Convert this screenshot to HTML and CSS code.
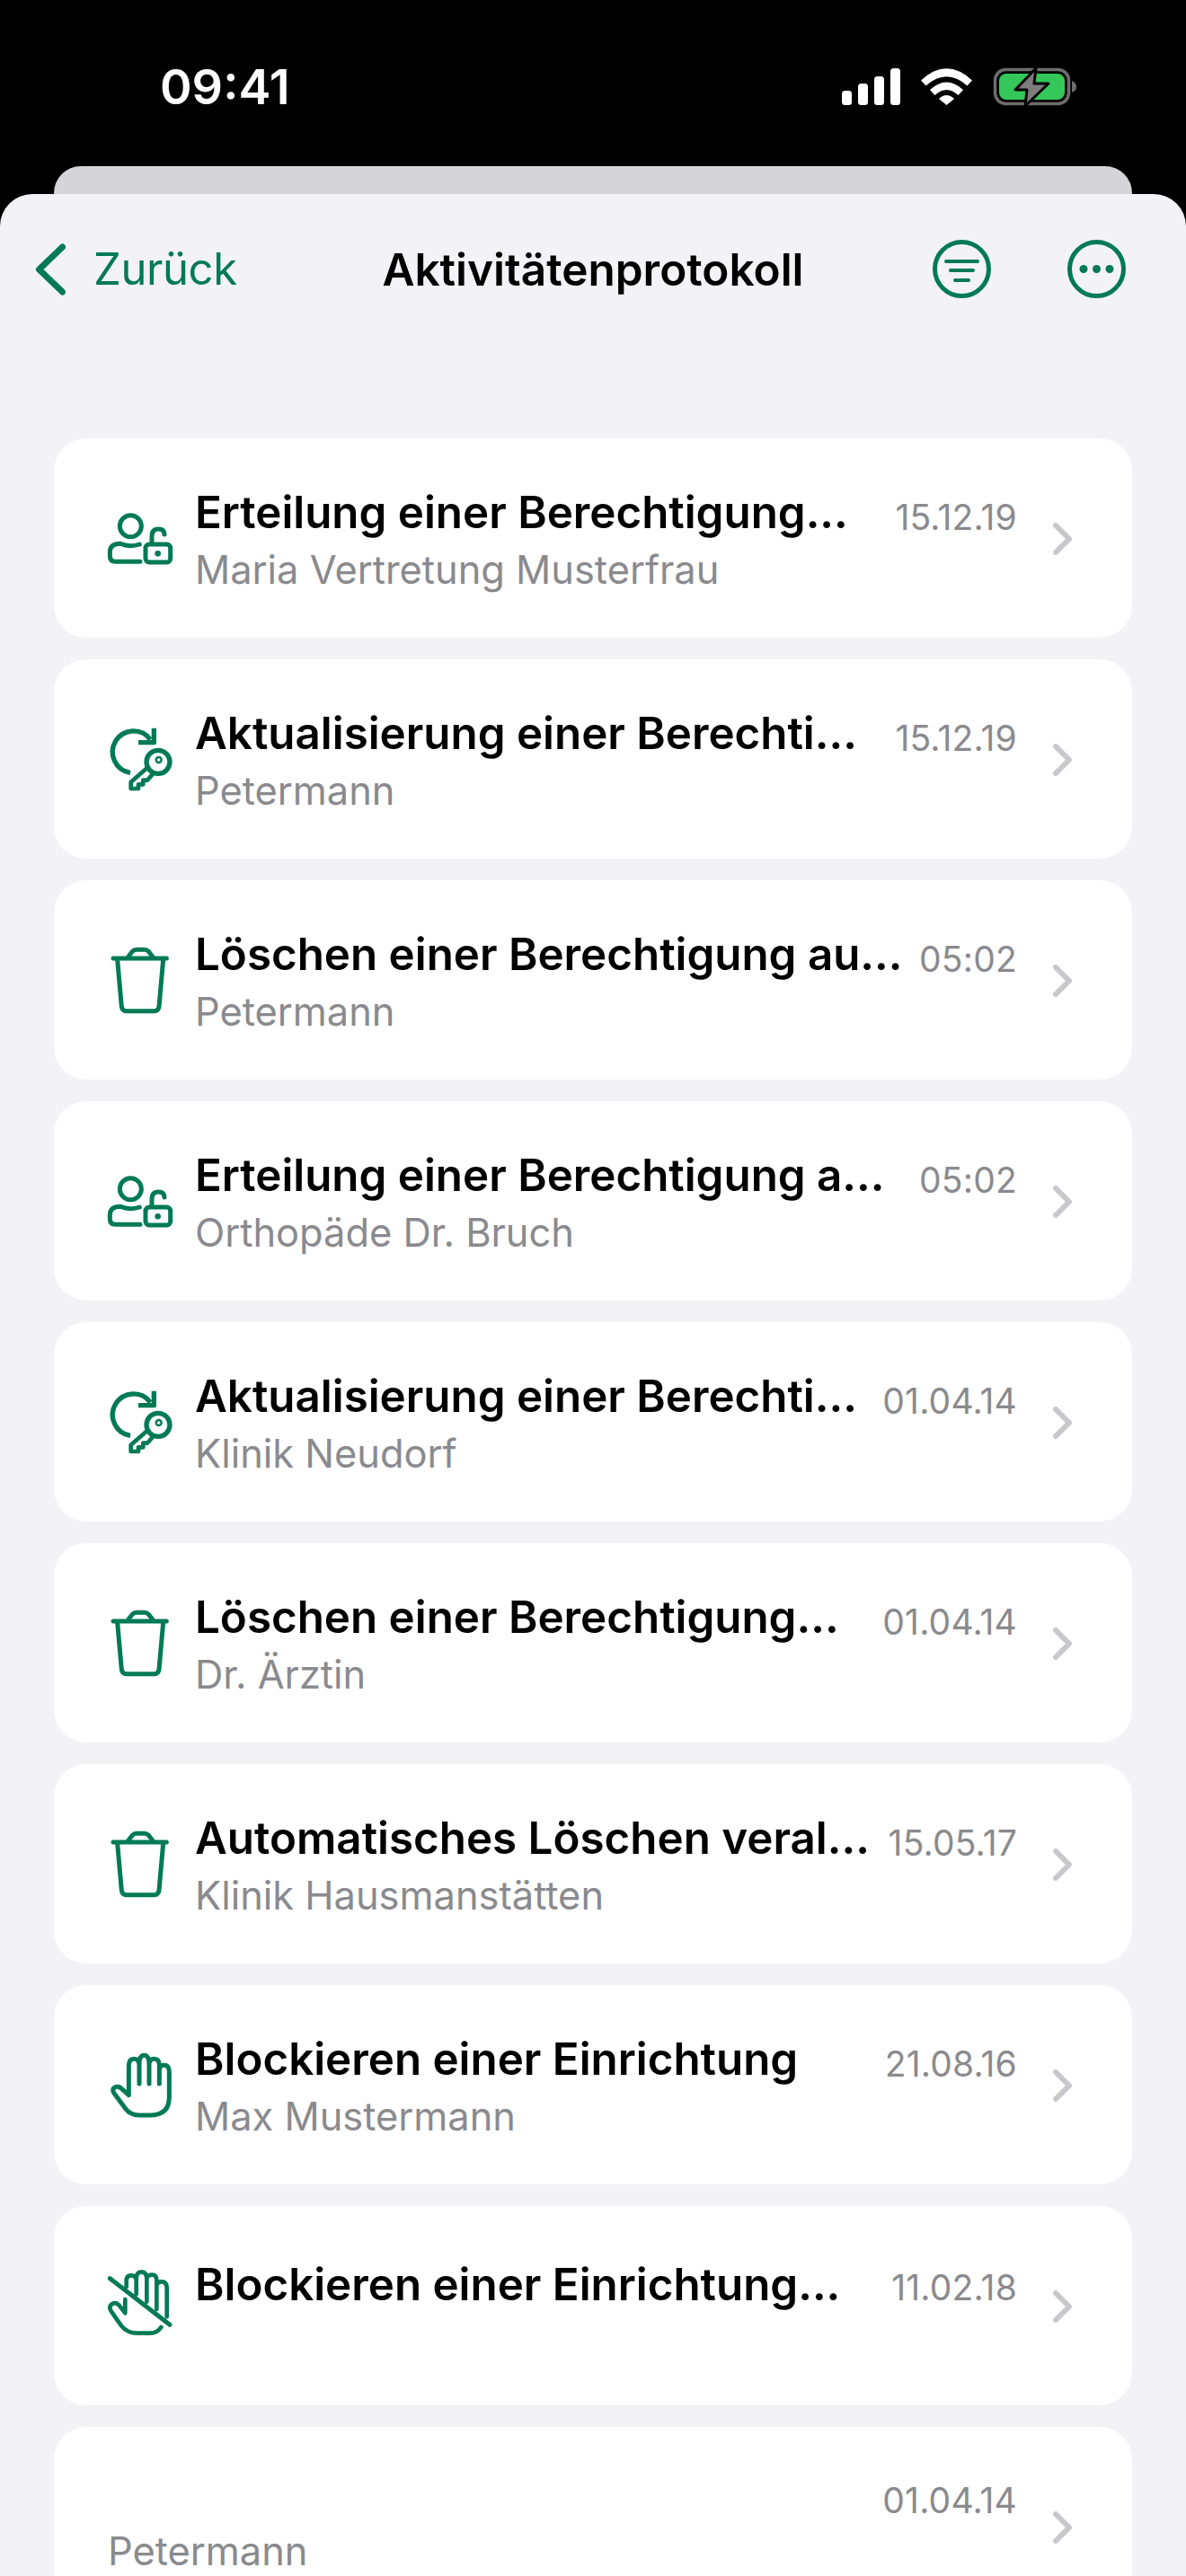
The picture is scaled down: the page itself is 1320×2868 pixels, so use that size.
FILE: index.html
```html
<!DOCTYPE html>
<html lang="de">
<head>
    <meta charset="UTF-8">
    <meta name="viewport" content="width=device-width, initial-scale=1.0">
    <title>Aktivitätenprotokoll</title>
    <link rel="stylesheet" href="styles.css">
</head>
<body>
    <!-- Icon-Definitionen (Koordinaten in 3x) -->
    <svg class="icon-defs" xmlns="http://www.w3.org/2000/svg">
        <symbol id="icon-grant" viewBox="0 42 381 390">
            <g fill="none" stroke="currentColor" stroke-width="15" stroke-linecap="round" stroke-linejoin="round">
                <circle cx="166" cy="197" r="36"/>
                <path d="M198 316H116Q97 316 97 297V285Q97 256 132 256Q148 263 166 263Q182 263 196 258"/>
                <rect x="216" y="258" width="83" height="60" rx="12"/>
                <path d="M237 250V232Q237 207 259 207Q279 207 279 225"/>
            </g>
            <circle cx="257" cy="289" r="10" fill="currentColor"/>
        </symbol>
        <symbol id="icon-update" viewBox="0 0 381 390">
            <g fill="none" stroke="currentColor" stroke-width="16" stroke-linejoin="round">
                <path d="M165 241A70 70 0 1 1 232 130"/>
                <path d="M192 140H244V92"/>
                <circle cx="258" cy="205" r="39"/>
                <path d="M222 224L167 272V294H192V280H208V266H222L240 245" stroke-width="14"/>
            </g>
            <circle cx="260" cy="198" r="9" fill="none" stroke="currentColor" stroke-width="7"/>
        </symbol>
        <symbol id="icon-delete" viewBox="0 -12 381 390">
            <g fill="none" stroke="currentColor" stroke-width="15" stroke-linecap="round" stroke-linejoin="round">
                <path d="M108 111H286"/>
                <path d="M158 106L172 88Q178 82 186 82H212Q220 82 226 88L240 106"/>
                <path d="M122 115L136 272Q138 287 152 287H245Q259 287 261 272L275 115"/>
            </g>
        </symbol>
        <symbol id="icon-block" viewBox="0 -12 381 390">
            <path fill="none" stroke="currentColor" stroke-width="15" stroke-linecap="round" stroke-linejoin="round" d="M160 215V120Q160 97 178 97Q195 97 195 120V180M195 115Q195 85 211 85Q228 85 228 115V180M228 115Q228 97 245 97Q262 97 262 120V180M262 135Q262 118 277 118Q295 118 295 140V225Q295 285 230 285H195Q165 285 148 262L112 213Q100 195 118 190Q130 188 140 200L160 218"/>
        </symbol>
        <symbol id="icon-unblock" viewBox="0 18 381 390">
            <path fill="none" stroke="currentColor" stroke-width="14" stroke-linecap="round" stroke-linejoin="round" d="M152 150V130Q152 112 168 112Q185 112 185 130V175M185 125Q185 100 202 100Q220 100 220 125V200M220 125Q220 110 238 110Q253 110 253 130V225M253 148Q253 133 270 133Q287 133 287 155V250M148 192V238L128 212Q118 200 105 207Q92 215 100 230L135 280Q155 305 190 305H230Q255 305 268 285"/>
            <path fill="none" stroke="currentColor" stroke-width="15" stroke-linecap="round" d="M97 122L297 277"/>
        </symbol>
        <symbol id="icon-chevron" viewBox="0 0 24 36">
            <path d="M5 3L20 18L5 33" fill="none" stroke="currentColor" stroke-width="6" stroke-linecap="round" stroke-linejoin="round"/>
        </symbol>
    </svg>

    <div class="statusbar">
        <span class="statusbar-time">09:41</span>
        <div class="statusbar-icons">
            <svg class="signal" width="65" height="41" viewBox="0 0 65 41">
                <rect x="0" y="25" width="11" height="16" rx="3.5"/>
                <rect x="18" y="17" width="11" height="24" rx="3.5"/>
                <rect x="36" y="9" width="11" height="32" rx="3.5"/>
                <rect x="54" y="0" width="11" height="41" rx="3.5"/>
            </svg>
            <svg class="wifi" width="57" height="41" viewBox="0 0 57 41">
                <path d="M0 13.500Q28.500 -13 57 13.500L51.500 19.500Q28.500 -1 5.500 19.500Z"/>
                <path d="M10 24Q28.500 7 47 24L41.500 30Q28.500 18 15.500 30Z"/>
                <path d="M20 34Q28.500 26 37 34L28.500 41Z"/>
            </svg>
            <svg class="battery" width="93" height="45" viewBox="0 0 93 45">
                <rect x="2.500" y="2.500" width="82" height="38" rx="12" fill="none" stroke="#6d6d6d" stroke-width="3.500"/>
                <rect x="7" y="7" width="73" height="29" rx="8" fill="#34c759"/>
                <path d="M88 15Q93 17 93 21.500Q93 26 88 28Z" fill="#6d6d6d"/>
                <path d="M48 1L25 25H38L36 43L62 18H46Z" fill="#7d7d7d" stroke="#000" stroke-width="3" stroke-linejoin="round"/>
            </svg>
        </div>
    </div>

    <div class="sheet-behind"></div>

    <div class="sheet">
        <div class="navbar">
            <a class="back-link">
                <svg class="back-chevron" width="33" height="58" viewBox="0 0 33 58">
                    <path d="M29.500 4L3.500 29L29.500 54" fill="none" stroke="currentColor" stroke-width="7" stroke-linecap="round" stroke-linejoin="round"/>
                </svg>
                <span>Zurück</span>
            </a>
            <h1 class="navbar-title">Aktivitätenprotokoll</h1>
            <div class="navbar-actions">
                <svg width="65" height="65" viewBox="0 0 65 65">
                    <circle cx="32.500" cy="32.500" r="30" fill="none" stroke="currentColor" stroke-width="5"/>
                    <path d="M15 24H50M20 34H45M25 45H40" fill="none" stroke="currentColor" stroke-width="4" stroke-linecap="round"/>
                </svg>
                <svg width="65" height="65" viewBox="0 0 65 65">
                    <circle cx="32.500" cy="32.500" r="30" fill="none" stroke="currentColor" stroke-width="5"/>
                    <circle cx="18" cy="32.500" r="4.500" fill="currentColor"/>
                    <circle cx="32.500" cy="32.500" r="4.500" fill="currentColor"/>
                    <circle cx="47" cy="32.500" r="4.500" fill="currentColor"/>
                </svg>
            </div>
        </div>

        <div class="entries">
            <a class="entry">
                <svg class="entry-icon"><use href="#icon-grant"/></svg>
                <div class="entry-text">
                    <div class="entry-title">Erteilung einer Berechtigung...</div>
                    <div class="entry-sub">Maria Vertretung Musterfrau</div>
                </div>
                <span class="entry-date">15.12.19</span>
                <svg class="entry-chevron"><use href="#icon-chevron"/></svg>
            </a>
            <a class="entry">
                <svg class="entry-icon"><use href="#icon-update"/></svg>
                <div class="entry-text">
                    <div class="entry-title">Aktualisierung einer Berechti...</div>
                    <div class="entry-sub">Petermann</div>
                </div>
                <span class="entry-date">15.12.19</span>
                <svg class="entry-chevron"><use href="#icon-chevron"/></svg>
            </a>
            <a class="entry">
                <svg class="entry-icon"><use href="#icon-delete"/></svg>
                <div class="entry-text">
                    <div class="entry-title">Löschen einer Berechtigung au...</div>
                    <div class="entry-sub">Petermann</div>
                </div>
                <span class="entry-date">05:02</span>
                <svg class="entry-chevron"><use href="#icon-chevron"/></svg>
            </a>
            <a class="entry">
                <svg class="entry-icon"><use href="#icon-grant"/></svg>
                <div class="entry-text">
                    <div class="entry-title">Erteilung einer Berechtigung a...</div>
                    <div class="entry-sub">Orthopäde Dr. Bruch</div>
                </div>
                <span class="entry-date">05:02</span>
                <svg class="entry-chevron"><use href="#icon-chevron"/></svg>
            </a>
            <a class="entry">
                <svg class="entry-icon"><use href="#icon-update"/></svg>
                <div class="entry-text">
                    <div class="entry-title">Aktualisierung einer Berechti...</div>
                    <div class="entry-sub">Klinik Neudorf</div>
                </div>
                <span class="entry-date">01.04.14</span>
                <svg class="entry-chevron"><use href="#icon-chevron"/></svg>
            </a>
            <a class="entry">
                <svg class="entry-icon"><use href="#icon-delete"/></svg>
                <div class="entry-text">
                    <div class="entry-title">Löschen einer Berechtigung...</div>
                    <div class="entry-sub">Dr. Ärztin</div>
                </div>
                <span class="entry-date">01.04.14</span>
                <svg class="entry-chevron"><use href="#icon-chevron"/></svg>
            </a>
            <a class="entry">
                <svg class="entry-icon"><use href="#icon-delete"/></svg>
                <div class="entry-text">
                    <div class="entry-title">Automatisches Löschen veral...</div>
                    <div class="entry-sub">Klinik Hausmanstätten</div>
                </div>
                <span class="entry-date">15.05.17</span>
                <svg class="entry-chevron"><use href="#icon-chevron"/></svg>
            </a>
            <a class="entry">
                <svg class="entry-icon"><use href="#icon-block"/></svg>
                <div class="entry-text">
                    <div class="entry-title">Blockieren einer Einrichtung</div>
                    <div class="entry-sub">Max Mustermann</div>
                </div>
                <span class="entry-date">21.08.16</span>
                <svg class="entry-chevron"><use href="#icon-chevron"/></svg>
            </a>
            <a class="entry entry-single">
                <svg class="entry-icon"><use href="#icon-unblock"/></svg>
                <div class="entry-text">
                    <div class="entry-title">Blockieren einer Einrichtung...</div>
                </div>
                <span class="entry-date">11.02.18</span>
                <svg class="entry-chevron"><use href="#icon-chevron"/></svg>
            </a>
            <a class="entry entry-plain">
                <div class="entry-text">
                    <div class="entry-sub">Petermann</div>
                </div>
                <span class="entry-date">01.04.14</span>
                <svg class="entry-chevron"><use href="#icon-chevron"/></svg>
            </a>
        </div>
    </div>
</body>
</html>
```

FILE: styles.css
```css
html, body {
    height: 2868px;
    overflow: hidden;
}

body {
    margin: 0;
    background-color: #000;
    font-family: Inter, "Noto Sans", sans-serif;
    color: #000;
}

.icon-defs {
    display: none;
}

/* Statusleiste */
.statusbar {
    height: 185px;
    box-sizing: border-box;
    padding: 75px 122px 0 178px;
    display: flex;
    justify-content: space-between;
    align-items: flex-start;
    color: #fff;
}

.statusbar-time {
    font-size: 54px;
    font-weight: 600;
    line-height: 44px;
}

.statusbar-icons {
    display: flex;
    align-items: flex-start;
    gap: 23px;
}

.signal, .wifi {
    fill: #fff;
    margin-top: 1px;
}

/* Karten im Hintergrund */
.sheet-behind {
    height: 31px;
    margin: 0 60px;
    background-color: #d4d4d9;
    border-radius: 30px 30px 0 0;
}

.sheet {
    height: 2652px;
    background-color: #f2f2f7;
    border-radius: 36px 36px 0 0;
}

.navbar {
    height: 272px;
    box-sizing: border-box;
    padding: 51px 67px 0;
    display: grid;
    grid-template-columns: 1fr auto 1fr;
    align-items: start;
}

.back-link {
    display: flex;
    align-items: center;
    gap: 31px;
    margin-left: -27px;
    color: #007a55;
    font-size: 49px;
    letter-spacing: -0.4px;
    line-height: 66px;
}

.navbar-title {
    margin: 0;
    font-size: 49.500px;
    font-weight: 600;
    line-height: 66px;
    white-space: nowrap;
}

.navbar-actions {
    display: flex;
    justify-content: flex-end;
    gap: 85px;
    color: #007a55;
}

/* Liste */
.entries {
    display: flex;
    flex-direction: column;
    gap: 24px;
    margin: 0 60px;
}

.entry {
    display: flex;
    flex: none;
    height: 222px;
    box-sizing: border-box;
    padding: 50px 66px 0 30px;
    background-color: #fff;
    border-radius: 36px;
}

.entry-icon {
    flex: none;
    width: 127px;
    height: 130px;
    margin-top: -4px;
    color: #007a55;
}

.entry-text {
    flex: 1;
    min-width: 0;
}

.entry-title {
    font-size: 49.300px;
    font-weight: 600;
    line-height: 64px;
    white-space: nowrap;
}

.entry-sub {
    font-size: 43.400px;
    line-height: 64px;
    color: #8a8a8e;
    white-space: nowrap;
}

.entry-date {
    flex: none;
    margin-top: 6px;
    font-size: 39px;
    letter-spacing: 0.2px;
    line-height: 64px;
    color: #8a8a8e;
}

.entry-chevron {
    flex: none;
    align-self: center;
    width: 24px;
    height: 36px;
    margin: -48px 0 0 38px;
    color: #c7c7cc;
}

.entry-single {
    padding-top: 55px;
}

.entry-single .entry-icon {
    margin-top: -9px;
}

.entry-single .entry-date {
    margin-top: 4px;
}

.entry-single .entry-chevron {
    margin-top: -53px;
}

.entry-plain {
    padding-left: 60px;
}

.entry-plain .entry-text {
    padding-top: 56px;
}

.entry-plain .entry-date {
    margin-top: 0;
}
```
